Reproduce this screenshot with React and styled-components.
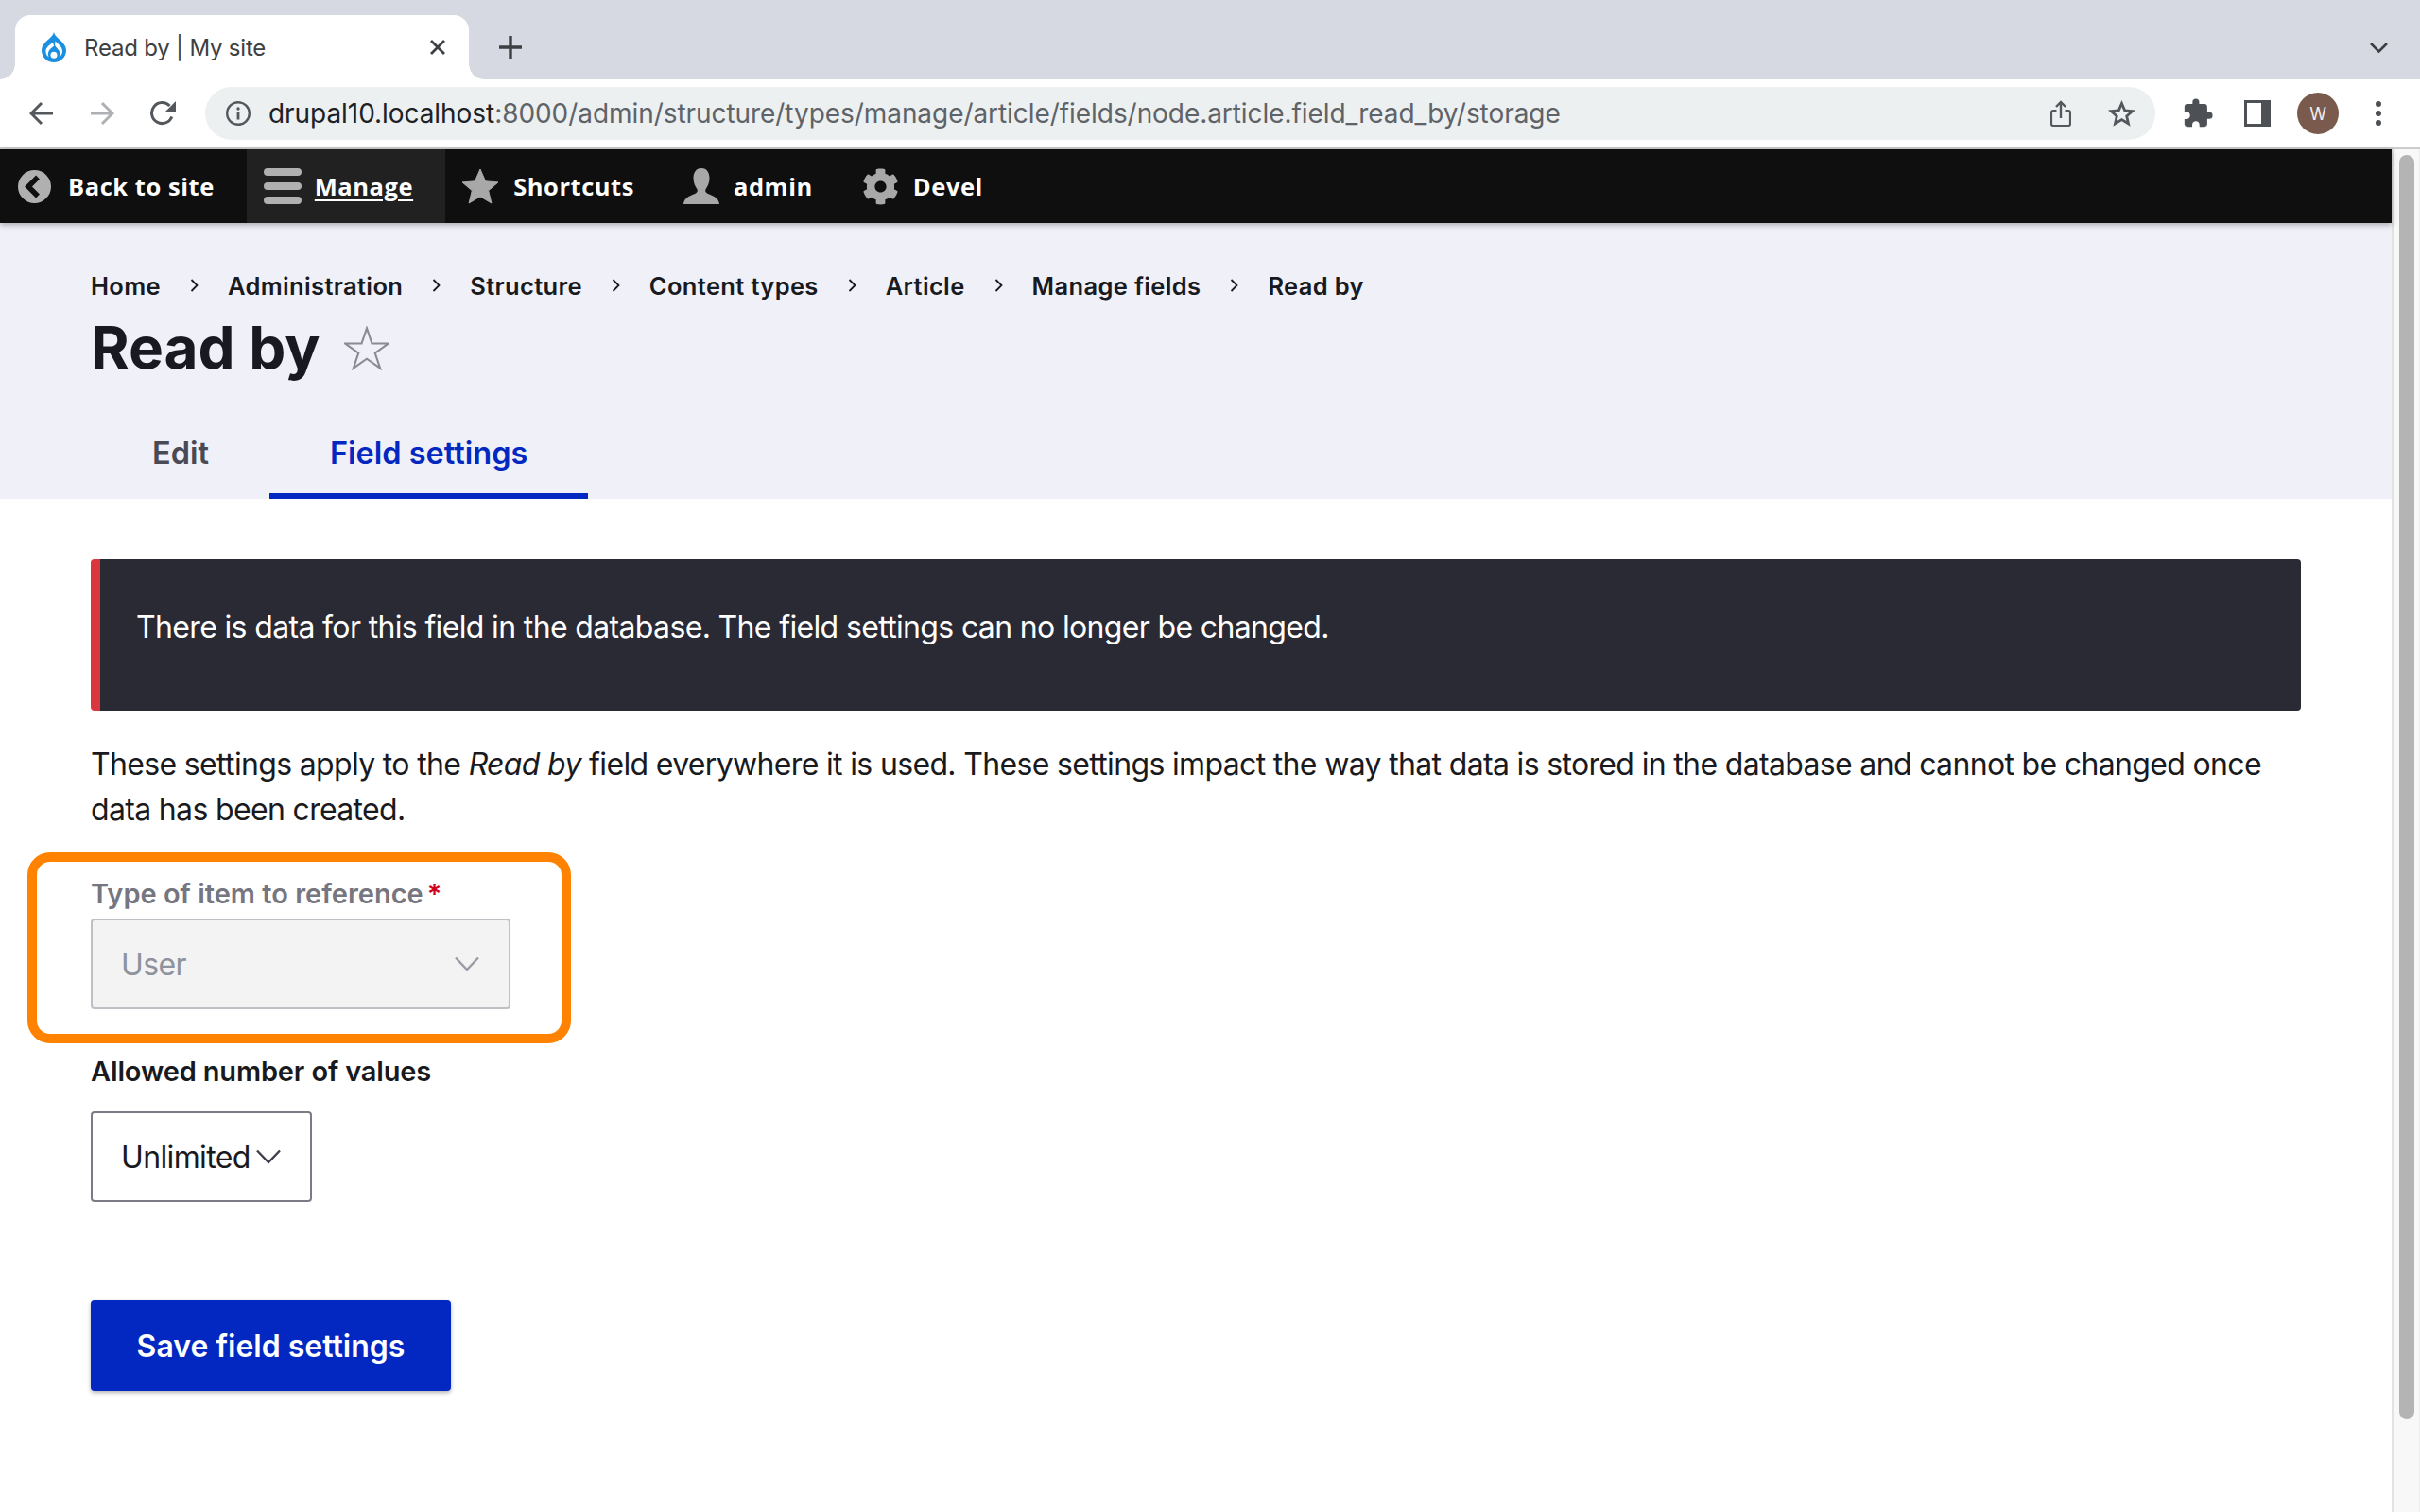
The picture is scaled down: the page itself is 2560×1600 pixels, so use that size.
import React from "react";
import styled, { createGlobalStyle } from "styled-components";
import { MdExtension } from "react-icons/md";
import { FaCog } from "react-icons/fa";

const Global = createGlobalStyle`
  html, body { margin: 0; padding: 0; background: #fff; }
  body { font-family: Inter, "Liberation Sans", sans-serif; color: #191a20; }
  * { box-sizing: border-box; }
`;

const Screen = styled.div`
  width: 2560px; height: 1600px; overflow: hidden;
  display: flex; flex-direction: column; background: #fff;
`;
const TabStrip = styled.div`
  height: 84px; flex: none; background: #d6d9e2;
  display: flex; align-items: flex-end; padding-left: 16px;
`;
const BrowserTab = styled.div`
  position: relative; width: 480px; height: 68px; background: #fff;
  border-radius: 16px 16px 0 0; display: flex; align-items: center; padding: 0 24px 0 28px;
  &::before, &::after {
    content: ""; position: absolute; bottom: 0; width: 16px; height: 16px;
    background: radial-gradient(circle at var(--cx) 0, #d6d9e2 15.5px, #fff 16px);
  }
  &::before { left: -16px; --cx: 0; }
  &::after { right: -16px; --cx: 16px; }
`;
const TabTitle = styled.span`
  font-size: 24px; color: #3c4043; margin-left: 19px; flex: 1; letter-spacing: -0.2px;
`;
const NewTab = styled.div`
  margin: 0 0 22px 32px; width: 24px; height: 24px; display: flex;
`;
const StripEnd = styled.div`
  margin: 0 34px 28px auto; width: 19px; height: 11px; display: flex;
`;
const BrowserBar = styled.div`
  height: 74px; flex: none; background: #fff; border-bottom: 2px solid #ccc;
  display: flex; align-items: flex-start; position: relative;
`;
const NavIcons = styled.div`
  width: 217px; height: 72px; flex: none; display: flex; align-items: center; padding-left: 31px;
`;
const NavIcon = styled.svg`
  width: ${p => p.$w || 26}px; height: ${p => p.$h || 26}px; flex: none;
  margin-right: ${p => p.$mr || 0}px; margin-left: ${p => p.$ml || 0}px; display: block;
`;
const Omnibox = styled.div`
  width: 2063px; height: 56px; margin-top: 8px; border-radius: 28px; background: #ecf0f1;
  display: flex; align-items: center; padding: 0 21px 0 22px; flex: none;
`;
const Url = styled.div`
  font-size: 28px; color: #5f6368; margin-left: 19px; flex: 1; white-space: nowrap; letter-spacing: -0.06px;
  b { font-weight: 400; color: #202124; }
`;
const ExtIcons = styled.div`
  flex: 1; height: 72px; display: flex; align-items: center; padding-left: 31px;
`;
const Avatar = styled.div`
  width: 44px; height: 44px; border-radius: 50%; background: #7b5a4e; color: #f4efec;
  font-size: 18px; display: flex; align-items: center; justify-content: center; margin-left: 28px; flex: none;
`;
const Dots = styled.div`
  display: flex; flex-direction: column; gap: 4px; margin-left: 39px;
  i { display: block; width: 6px; height: 6px; border-radius: 50%; background: #4d5156; }
`;

const Viewport = styled.div` flex: 1; display: flex; min-height: 0; `;
const Page = styled.div` width: 2530px; flex: none; display: flex; flex-direction: column; `;
const Scrollbar = styled.div`
  flex: 1; background: #f8f8f8; border-left: 2px solid #e2e2e2; border-right: 1px solid #ececec;
  padding: 6px 0 0 6px;
`;
const Thumb = styled.div` width: 16px; height: 1338px; border-radius: 8px; background: #b4b4b4; `;

const AdminBar = styled.nav`
  height: 78px; flex: none; background: #0f0f0f; display: flex; position: relative;
  box-shadow: 0 2px 6px rgba(0,0,0,.3);
`;
const AdminItem = styled.a`
  display: flex; align-items: center; height: 100%; gap: ${p => p.$gap}px;
  padding: 0 34px 0 ${p => p.$pl}px; background: ${p => (p.$active ? "#212121" : "transparent")};
  color: #fff; font: 700 25.500px "Open Sans", sans-serif; letter-spacing: 0.55px;
  text-decoration: none; white-space: nowrap;
  span { text-decoration: ${p => (p.$active ? "underline" : "none")}; text-underline-offset: 4px; text-decoration-thickness: 2px; }
`;
const AdminIcon = styled.svg` width: ${p => p.$w}px; height: ${p => p.$h || p.$w}px; display: block; flex: none; `;

const PageHeader = styled.header`
  height: 292px; flex: none; background: #eff0f8; padding: 50px 0 0 96px; display: flex; flex-direction: column;
`;
const Crumbs = styled.ol`
  display: flex; align-items: center; list-style: none; margin: 0; padding: 0; height: 32px;
  li { font-size: 25.500px; letter-spacing: 0.35px; font-weight: 600; color: #191a20; display: flex; align-items: center; white-space: nowrap; }
`;
const CrumbSep = styled.svg` width: 9px; height: 14px; margin: 0 31px; display: block; `;
const TitleRow = styled.div` display: flex; align-items: center; margin-top: 14px; height: 72px; `;
const Title = styled.h1` font-size: 62px; font-weight: 700; line-height: 72px; margin: 0; color: #191a20; `;
const TitleStar = styled.svg` width: 48px; height: 47px; margin: 0 0 0 25px; display: block; `;
const Tabs = styled.div` display: flex; margin: auto 0 0 1px; `;
const PageTab = styled.div`
  padding: 3px 64px 0; height: 94px; display: flex; align-items: center; font-size: 32.500px; font-weight: 600;
  color: ${p => (p.$active ? "#0328c1" : "#494a53")};
  border-bottom: 6px solid ${p => (p.$active ? "#0328c1" : "transparent")};
`;

const Content = styled.main` padding: 64px 96px 0; flex: 1; display: flex; flex-direction: column; align-items: flex-start; `;
const Alert = styled.div`
  width: 100%; height: 160px; background: #2a2a35; border-left: 10px solid #d9363e; border-radius: 4px;
  padding: 48px 0 0 38px; color: #fff; font-size: 32px; line-height: 48px; letter-spacing: -0.65px;
`;
const Lead = styled.p` font-size: 32px; line-height: 48px; margin: 33px 0 0; color: #191a20; letter-spacing: -0.66px; `;
const Field = styled.div` position: relative; margin-top: ${p => p.$mt}px; display: flex; flex-direction: column; `;
const Highlight = styled.div`
  position: absolute; top: -28px; bottom: -36px; left: -67px; right: -64px;
  border: 10px solid #ff8200; border-radius: 24px; pointer-events: none;
`;
const Label = styled.label`
  font-size: 29px; line-height: 32px; font-weight: 600; color: ${p => (p.$off ? "#75767f" : "#191a20")};
  letter-spacing: ${p => (p.$off ? "0" : "-0.15px")};
  margin-bottom: ${p => p.$mb}px; display: block;
  em { font-style: normal; color: #d0021b; margin-left: 4px; }
`;
const SelectBox = styled.div`
  width: ${p => p.$w}px; height: 96px; border-radius: 4px; padding: 0 ${p => p.$pr}px 0 30px;
  border: 2.500px solid ${p => (p.$off ? "#bfc0c6" : "#7a7b84")};
  background: ${p => (p.$off ? "#f3f3f3" : "#fff")};
  color: ${p => (p.$off ? "#8e929c" : "#191a20")};
  display: flex; align-items: center; justify-content: space-between; font-size: 32px; letter-spacing: -0.64px;
`;
const Chevron = styled.svg` width: 26px; height: 16px; display: block; flex: none; `;
const SaveButton = styled.button`
  margin-top: 104px; width: 381px; height: 96px; background: #0328c1; color: #fff; border: 0; border-radius: 4px;
  font: 600 32px Inter, sans-serif; box-shadow: 0 2px 4px rgba(0,0,0,.3);
`;

const Cross = () => (
  <NavIcon $w={18} $h={18} viewBox="0 0 18 18"><path d="M2 2l14 14M16 2L2 16" stroke="#3c4043" strokeWidth="2.800" fill="none" /></NavIcon>
);

const DrupalDrop = () => (
  <NavIcon $w={26} $h={32} viewBox="0 0 26 32">
    <path d="M13 0c.6 3 2.600 4.800 5 6.900C21.800 10.300 26 13.900 26 19.200 26 26.400 20.200 32 13 32S0 26.400 0 19.200C0 13.900 4.200 10.300 8 6.900 10.400 4.800 12.400 3 13 0z" fill="#1b8fe0" />
    <path d="M11.800 10.800C9.300 13.300 4.400 15.900 4.400 20.500c0 2.500 1.300 4.600 3.300 5.800-1-1.700-1.200-3.700-.4-5.600 1.100-2.600 3.700-4.200 5.800-6.100z" fill="#fff" />
    <path d="M14.500 9.500c2.500 3 7.500 5.500 7.500 10.500 0 2.600-1.200 5-3.400 6.300 1.400-2.300 1.200-4.500-.1-6.500-1.500-2.400-3.700-4-4.500-6z" fill="#fff" />
    <circle cx="13" cy="24.200" r="3.500" fill="#fff" />
  </NavIcon>
);

const crumbs = ["Home", "Administration", "Structure", "Content types", "Article", "Manage fields", "Read by"];

export default function App() {
  return (
    <Screen>
      <Global />
      <TabStrip>
        <BrowserTab>
          <DrupalDrop />
          <TabTitle>Read by | My site</TabTitle>
          <Cross />
        </BrowserTab>
        <NewTab>
          <NavIcon $w={24} $h={24} viewBox="0 0 24 24"><path d="M12 0v24M0 12h24" stroke="#3c4043" strokeWidth="3.400" fill="none" /></NavIcon>
        </NewTab>
        <StripEnd>
          <NavIcon $w={19} $h={11} viewBox="0 0 19 11"><path d="M1 1l8.500 8.500L18 1" stroke="#3c4043" strokeWidth="2.600" fill="none" /></NavIcon>
        </StripEnd>
      </TabStrip>

      <BrowserBar>
        <NavIcons>
          <NavIcon viewBox="0 0 26 26" $mr={38}><path d="M25 13H3M13 2L2 13l11 11" stroke="#54585d" strokeWidth="3" fill="none" /></NavIcon>
          <NavIcon viewBox="0 0 26 26" $mr={38}><path d="M1 13h22M13 2l11 11-11 11" stroke="#aeb0b3" strokeWidth="3" fill="none" /></NavIcon>
          <NavIcon viewBox="0 0 27 26" $w={27}>
            <path d="M22.800 16.500A11 11 0 1 1 20.500 5" stroke="#54585d" strokeWidth="3" fill="none" />
            <path d="M27 0v11H16z" fill="#54585d" />
          </NavIcon>
        </NavIcons>
        <Omnibox>
          <NavIcon viewBox="0 0 26 26" $w={26}>
            <circle cx="13" cy="13" r="11.800" stroke="#54585d" strokeWidth="2.400" fill="none" />
            <circle cx="13" cy="8" r="1.700" fill="#54585d" />
            <rect x="11.600" y="11.500" width="2.800" height="8" fill="#54585d" />
          </NavIcon>
          <Url><b>drupal10.localhost</b>:8000/admin/structure/types/manage/article/fields/node.article.field_read_by/storage</Url>
          <NavIcon viewBox="0 0 22 28" $w={22} $h={28} $mr={39}>
            <path d="M6.500 11H3a2 2 0 0 0-2 2v12a2 2 0 0 0 2 2h16a2 2 0 0 0 2-2V13a2 2 0 0 0-2-2h-3.500" stroke="#54585d" strokeWidth="2.200" fill="none" />
            <path d="M11 19V2M6 7l5-5 5 5" stroke="#54585d" strokeWidth="2.400" fill="none" />
          </NavIcon>
          <NavIcon viewBox="0 0 29 28" $w={29} $h={28}>
            <path d="M14.500 3.500l3.200 7.400 8 .7-6 5.300 1.800 7.900-7-4.200-7 4.200 1.800-7.900-6-5.300 8-.7z" stroke="#54585d" strokeWidth="2.800" fill="none" />
          </NavIcon>
        </Omnibox>
        <ExtIcons>
          <MdExtension size={34} color="#4d5156" style={{ flex: "none", margin: "0 32px 0 -3px" }} />
          <NavIcon viewBox="0 0 28 28" $w={28} $h={28}>
            <path fillRule="evenodd" d="M0 0h28v28H0zM3 3v22h15V3z" fill="#4d5156" />
          </NavIcon>
          <Avatar>W</Avatar>
          <Dots><i /><i /><i /></Dots>
        </ExtIcons>
      </BrowserBar>

      <Viewport>
        <Page>
          <AdminBar>
            <AdminItem $pl={19} $gap={18}>
              <AdminIcon $w={35} viewBox="0 0 35 35">
                <circle cx="17.500" cy="17.500" r="17.500" fill="#b0b0b0" />
                <path d="M21 7.500L11 17.500l10 10" stroke="#0f0f0f" strokeWidth="5.500" fill="none" />
              </AdminIcon>
              <span>Back to site</span>
            </AdminItem>
            <AdminItem $pl={18} $gap={14} $active>
              <AdminIcon $w={40} $h={38} viewBox="0 0 40 38">
                <rect y="0" width="40" height="8" rx="4" fill="#b0b0b0" />
                <rect y="15" width="40" height="8" rx="4" fill="#b0b0b0" />
                <rect y="30" width="40" height="8" rx="4" fill="#b0b0b0" />
              </AdminIcon>
              <span>Manage</span>
            </AdminItem>
            <AdminItem $pl={18} $gap={16}>
              <AdminIcon $w={38} $h={38} viewBox="0 0 38 38">
                <path d="M19 1l5.600 12.800 13.400 1.100-10.300 8.800 3.200 13.300L19 30l-11.900 7 3.200-13.300L0 14.900l13.400-1.100z" fill="#a8a8a8" stroke="#a8a8a8" strokeWidth="1" strokeLinejoin="round" />
              </AdminIcon>
              <span>Shortcuts</span>
            </AdminItem>
            <AdminItem $pl={18} $gap={15}>
              <AdminIcon $w={38} $h={38} viewBox="0 0 38 38">
                <path d="M19 0c6 0 8.500 5 8.500 10.500 0 5-2 9-3.800 11.500-1 1.500-.5 3.500 1.300 4.500 3.500 1.800 12.500 4 13 11.500H0c.5-7.500 9.500-9.700 13-11.500 1.800-1 2.300-3 1.300-4.500C12.500 19.500 10.500 15.500 10.500 10.500 10.500 5 13 0 19 0z" fill="#a8a8a8" />
              </AdminIcon>
              <span>admin</span>
            </AdminItem>
            <AdminItem $pl={18} $gap={15}>
              <FaCog size={39} color="#a8a8a8" style={{ flex: "none" }} />
              <span>Devel</span>
            </AdminItem>
          </AdminBar>

          <PageHeader>
            <Crumbs>
              {crumbs.map((c, i) => (
                <li key={c}>
                  {c}
                  {i < crumbs.length - 1 && (
                    <CrumbSep viewBox="0 0 9 14"><path d="M1.500 1l6 6-6 6" stroke="#191a20" strokeWidth="1.800" fill="none" /></CrumbSep>
                  )}
                </li>
              ))}
            </Crumbs>
            <TitleRow>
              <Title>Read by</Title>
              <TitleStar viewBox="0 0 50 48">
                <path d="M25 3l5.700 17.200h18l-14.600 10.700 5.600 17.100L25 37.400 10.300 48l5.600-17.100L1.300 20.200h18z" stroke="#8a8b95" strokeWidth="2.200" fill="none" transform="translate(0 -1) scale(1 .98)" />
              </TitleStar>
            </TitleRow>
            <Tabs>
              <PageTab>Edit</PageTab>
              <PageTab $active>Field settings</PageTab>
            </Tabs>
          </PageHeader>

          <Content>
            <Alert>There is data for this field in the database. The field settings can no longer be changed.</Alert>
            <Lead>These settings apply to the <i>Read by</i> field everywhere it is used. These settings impact the way that data is stored in the database and cannot be changed once data has been created.</Lead>
            <Field $mt={49}>
              <Highlight />
              <Label $off $mb={10}>Type of item to reference<em>*</em></Label>
              <SelectBox $off $w={444} $pr={31}>
                User
                <Chevron viewBox="0 0 26 16"><path d="M1 1.500l12 12.500L25 1.500" stroke="#9b9ca5" strokeWidth="2.400" fill="none" /></Chevron>
              </SelectBox>
            </Field>
            <Field $mt={50}>
              <Label $mb={26}>Allowed number of values</Label>
              <SelectBox $w={234} $pr={31}>
                Unlimited
                <Chevron viewBox="0 0 26 16"><path d="M1 1.500l12 12.500L25 1.500" stroke="#3f404a" strokeWidth="2.400" fill="none" /></Chevron>
              </SelectBox>
            </Field>
            <SaveButton>Save field settings</SaveButton>
          </Content>
        </Page>
        <Scrollbar><Thumb /></Scrollbar>
      </Viewport>
    </Screen>
  );
}
